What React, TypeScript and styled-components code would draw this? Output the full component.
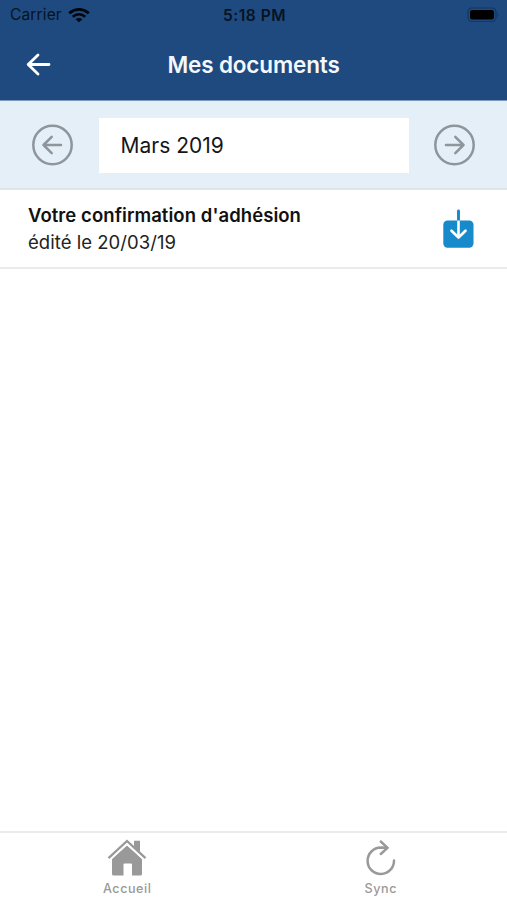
import React from "react";
import styled, { createGlobalStyle } from "styled-components";

const GlobalStyle = createGlobalStyle`
  * { box-sizing: border-box; }
  body {
    margin: 0;
    background: #fff;
    font-family: Inter, "Liberation Sans", sans-serif;
  }
`;

const Screen = styled.main`
  display: flex;
  flex-direction: column;
  width: 507px;
  height: 900px;
  overflow: hidden;
  background: #fff;
`;

const TopArea = styled.header`
  flex: none;
  height: 101px;
  background: #1e4a7f;
  border-bottom: 1px solid #7899b8;
`;

const StatusBar = styled.div`
  display: grid;
  grid-template-columns: 1fr auto 1fr;
  align-items: center;
  height: 30px;
  padding: 0 8px 0 10px;
  color: #071322;
`;

const Carrier = styled.div`
  display: flex;
  align-items: center;
  gap: 6px;
  font-size: 15.5px;
  line-height: 30px;
  letter-spacing: 0.15px;
`;

const Clock = styled.div`
  font-size: 15.5px;
  font-weight: 600;
  letter-spacing: 0.5px;
`;

const BatterySlot = styled.div`
  display: flex;
  justify-content: flex-end;
`;

const TitleBar = styled.div`
  display: grid;
  grid-template-columns: 60px 1fr 60px;
  align-items: center;
  height: 70px;
`;

const Title = styled.h1`
  margin: 0;
  text-align: center;
  color: #f4f8fd;
  font-size: 22.5px;
  font-weight: 600;
  line-height: 28px;
  letter-spacing: -0.15px;
`;

const IconButton = styled.button<{ $inset?: number }>`
  display: flex;
  margin: 0;
  padding: 0 0 0 ${(p) => p.$inset ?? 0}px;
  border: 0;
  background: none;
`;

const MonthBar = styled.section`
  flex: none;
  display: flex;
  align-items: center;
  justify-content: space-between;
  height: 89px;
  padding: 1px 31px 0;
  background: #e5eff7;
  border-bottom: 2px solid #dfe4e6;
`;

const MonthField = styled.div`
  width: 310px;
  height: 55px;
  padding-left: 22px;
  background: #fff;
  color: #161616;
  font-size: 21px;
  line-height: 55px;
`;

const DocumentRow = styled.article`
  flex: none;
  display: flex;
  justify-content: space-between;
  align-items: center;
  height: 79px;
  padding: 0 33px 0 28px;
  border-bottom: 2px solid #ebebeb;
`;

const DocumentName = styled.div`
  color: #111;
  font-size: 18.5px;
  font-weight: 600;
  line-height: 27px;
  letter-spacing: 0.06px;
`;

const DocumentDate = styled.div`
  color: #222;
  font-size: 18.5px;
  line-height: 27px;
  letter-spacing: 0.04px;
`;

const TabBar = styled.nav`
  display: grid;
  grid-template-columns: 1fr 1fr;
  height: 69px;
  margin-top: auto;
  border-top: 2px solid #ebebeb;
`;

const Tab = styled.div`
  display: flex;
  flex-direction: column;
  align-items: center;
  padding: 6px 0 0 1px;
`;

const TabLabel = styled.span`
  margin-top: 3px;
  color: #999;
  font-size: 12.6px;
  font-weight: 500;
  line-height: 18px;
  letter-spacing: 0.55px;
`;

const WifiIcon = () => (
  <svg width="22" height="15" viewBox="0 0 20 15" preserveAspectRatio="none" fill="none" stroke="#02060c">
    <path d="M1.1 5.3Q10-2.4 18.9 5.3" strokeWidth="2.6" />
    <path d="M4.3 8.7Q10 3.7 15.7 8.7" strokeWidth="2.5" />
    <path d="M10 14.2 6.9 11.2Q10 8.7 13.1 11.2Z" fill="#02060c" stroke="none" />
  </svg>
);

const BatteryIcon = () => (
  <svg width="32" height="16" viewBox="0 0 32 16">
    <rect x="1" y="1" width="28" height="13.5" rx="4" fill="none" stroke="#15365e" strokeWidth="1.2" />
    <rect x="3" y="3" width="24" height="9.5" rx="2.2" fill="#000" />
    <path d="M30.5 5.5Q32.2 7.7 30.5 10Z" fill="#15365e" />
  </svg>
);

const BackIcon = () => (
  <svg width="26" height="24" viewBox="0 0 26 24" fill="none" stroke="#fff" strokeWidth="2.8" strokeLinecap="round" strokeLinejoin="round">
    <path d="M24 11.5H3.2M13 2 3.2 11.5 13 21" />
  </svg>
);

const CircleArrow = ({ forward }: { forward?: boolean }) => (
  <svg width="43" height="42" viewBox="0 0 43 42" fill="none" stroke="#8e959b" strokeWidth="2.5" strokeLinecap="round" strokeLinejoin="round">
    <circle cx="21.5" cy="21" r="19.2" />
    <path d={forward ? "M13 21H30.5M22.3 12.8 30.5 21 22.3 29.2" : "M30 21H12.5M20.7 12.8 12.5 21 20.7 29.2"} />
  </svg>
);

const DownloadIcon = () => (
  <svg width="31" height="40" viewBox="0 0 31 40" fill="none" strokeLinejoin="round">
    <rect x="0.3" y="11.5" width="30.2" height="27.3" rx="4.2" fill="#178acb" />
    <path d="M15.5 2V12" stroke="#178acb" strokeWidth="2.9" strokeLinecap="round" />
    <path d="M15.5 11.5V28" stroke="#fff" strokeWidth="2.6" />
    <path d="M8.5 21.7 15.5 28.5 22.5 21.7" stroke="#fff" strokeWidth="2.7" strokeLinecap="round" />
  </svg>
);

const HomeIcon = () => (
  <svg width="40" height="38" viewBox="0 0 40 38" fill="#999">
    <path d="M20 6.5 35 20V35Q35 36.5 33.5 36.5H25V25.5Q25 24.5 24 24.5H17.5Q16.5 24.5 16.5 25.5V36.5H6.5Q5 36.5 5 35V20Z" />
    <path d="M1.5 19.2 20 2 38.5 19.2" fill="none" stroke="#999" strokeWidth="2.3" />
    <path d="M3.5 20.8 20 5.5 36.5 20.8" fill="none" stroke="#fff" strokeWidth="1" />
    <path d="M27 1.8H33V13.8L27 8.2Z" />
  </svg>
);

const SyncIcon = () => (
  <svg width="36" height="38" viewBox="0 0 36 38" fill="none" stroke="#999" strokeWidth="2.5" strokeLinecap="round" strokeLinejoin="round">
    <path d="M31 21.5A13.2 13.2 0 1 1 17.8 8.6L24.3 8.8" />
    <path d="M17.8 2.5 24.5 8.8 17.8 15" />
  </svg>
);

export default function App() {
  return (
    <Screen>
      <GlobalStyle />
      <TopArea>
        <StatusBar>
          <Carrier>Carrier <WifiIcon /></Carrier>
          <Clock>5:18 PM</Clock>
          <BatterySlot><BatteryIcon /></BatterySlot>
        </StatusBar>
        <TitleBar>
          <IconButton $inset={25} aria-label="Retour"><BackIcon /></IconButton>
          <Title>Mes documents</Title>
        </TitleBar>
      </TopArea>
      <MonthBar>
        <IconButton aria-label="Mois précédent"><CircleArrow /></IconButton>
        <MonthField>Mars 2019</MonthField>
        <IconButton aria-label="Mois suivant"><CircleArrow forward /></IconButton>
      </MonthBar>
      <DocumentRow>
        <div>
          <DocumentName>Votre confirmation d'adhésion</DocumentName>
          <DocumentDate>édité le 20/03/19</DocumentDate>
        </div>
        <DownloadIcon />
      </DocumentRow>
      <TabBar>
        <Tab><HomeIcon /><TabLabel>Accueil</TabLabel></Tab>
        <Tab><SyncIcon /><TabLabel>Sync</TabLabel></Tab>
      </TabBar>
    </Screen>
  );
}
